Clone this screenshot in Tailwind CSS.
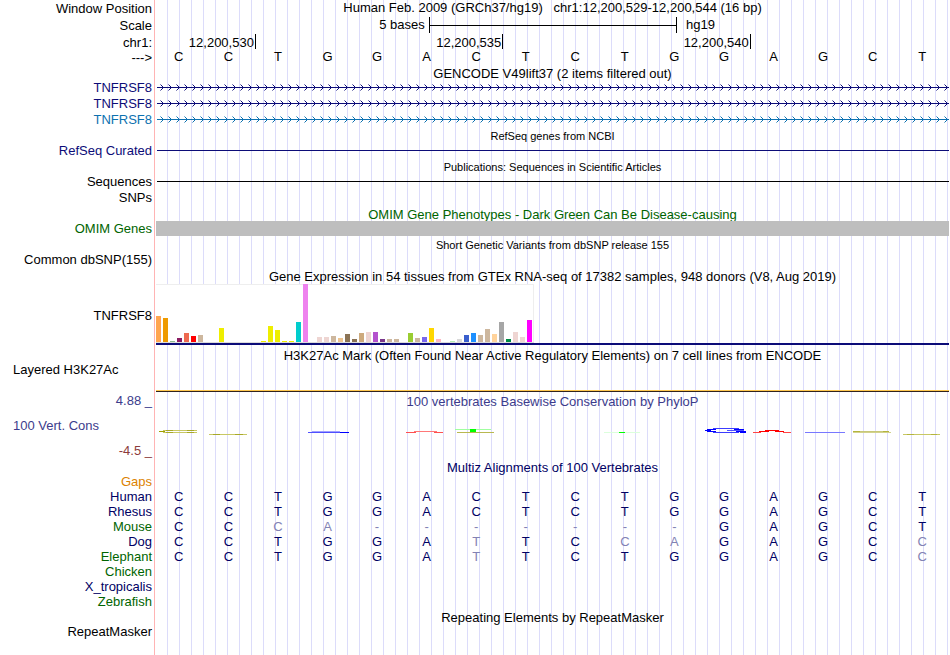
<!DOCTYPE html>
<html lang="en">
<head>
  <meta charset="utf-8">
  <meta name="viewport" content="width=device-width, initial-scale=1">
  <title>Genome Browser - hg19 chr1:12,200,529-12,200,544</title>
  <script src="https://cdn.jsdelivr.net/npm/@tailwindcss/browser@4"></script>
</head>
<body class="bg-white">
  <main class="relative min-h-screen pr-px font-['Liberation_Sans',Arial,sans-serif] text-[13px] leading-[15px] text-black">
    <!-- guide lines behind every track -->
    <div class="absolute inset-y-0 left-[154px] right-px border-l border-[#ffb4b4] pl-px">
      <div class="h-full bg-[repeating-linear-gradient(to_right,transparent_0px,transparent_11px,#dcdcfa_11px,#dcdcfa_12px)]"></div>
    </div>

    <div class="relative">
      <!-- position, scale and ruler -->
      <div class="flex h-[17px]">
        <div class="w-[156px] shrink-0 pr-1 text-right leading-[17px]">Window Position</div>
        <h1 class="flex-1 whitespace-pre text-center">Human Feb. 2009 (GRCh37/hg19)   chr1:12,200,529-12,200,544 (16 bp)</h1>
      </div>
      <div class="flex h-[17px]">
        <div class="w-[156px] shrink-0 pr-1 text-right leading-[17px]">Scale</div>
        <div class="flex flex-1">
          <div class="w-[34.4%] pr-1 text-right">5 bases</div>
          <div class="flex h-4 w-[31.3%] items-center border-x border-black">
            <div class="h-px w-full bg-black"></div>
          </div>
          <div class="pl-[9px]">hg19</div>
        </div>
      </div>
      <div class="flex h-[15px]">
        <div class="w-[156px] shrink-0 pr-1 text-right leading-[17px]">chr1:</div>
        <div class="flex flex-1">
          <div class="w-[12.6%] border-r border-black pr-px text-right leading-[17px]">12,200,530</div>
          <div class="w-[31.2%] border-r border-black pr-px text-right leading-[17px]">12,200,535</div>
          <div class="w-[31.2%] border-r border-black pr-px text-right leading-[17px]">12,200,540</div>
        </div>
      </div>
      <div class="flex h-[17px]">
        <div class="w-[156px] shrink-0 pr-1 text-right leading-[17px]">---&gt;</div>
        <div id="bases" class="grid flex-1 grid-cols-16 text-center"></div>
      </div>

      <!-- genes -->
      <h2 class="ml-[156px] h-[14px] text-center">GENCODE V49lift37 (2 items filtered out)</h2>
      <div class="flex h-4 text-[#0c0c78]">
        <div class="w-[156px] shrink-0 pr-1 text-right leading-4">TNFRSF8</div>
        <svg class="h-4 flex-1" shape-rendering="crispEdges">
          <defs>
            <pattern id="arrows" width="8" height="16" patternUnits="userSpaceOnUse">
              <path d="M5 5h1v1h-1zM6 6h1v3h-1zM5 9h1v1h-1z" fill="#0c0c78"/>
              <path d="M4 4h1v1h-1zM4 10h1v1h-1z" fill="#0c0c78" fill-opacity="0.5"/>
            </pattern>
            <pattern id="arrows-blue" width="8" height="16" patternUnits="userSpaceOnUse">
              <path d="M5 5h1v1h-1zM6 6h1v3h-1zM5 9h1v1h-1z" fill="#0c71b0"/>
              <path d="M4 4h1v1h-1zM4 10h1v1h-1z" fill="#0c71b0" fill-opacity="0.5"/>
            </pattern>
          </defs>
          <rect width="100%" height="16" fill="url(#arrows)"/>
          <rect x="1" y="7" width="100%" height="1" fill="#0c0c78"/>
        </svg>
      </div>
      <div class="flex h-4 text-[#0c0c78]">
        <div class="w-[156px] shrink-0 pr-1 text-right leading-4">TNFRSF8</div>
        <svg class="h-4 flex-1" shape-rendering="crispEdges">
          <rect width="100%" height="16" fill="url(#arrows)"/>
          <rect x="1" y="7" width="100%" height="1" fill="#0c0c78"/>
        </svg>
      </div>
      <div class="flex h-4 text-[#0c71b0]">
        <div class="w-[156px] shrink-0 pr-1 text-right leading-4">TNFRSF8</div>
        <svg class="h-4 flex-1" shape-rendering="crispEdges">
          <rect width="100%" height="16" fill="url(#arrows-blue)"/>
          <rect x="1" y="7" width="100%" height="1" fill="#0c71b0"/>
        </svg>
      </div>
      <h2 class="ml-[156px] h-[15px] pt-px text-center text-[11px]">RefSeq genes from NCBI</h2>
      <div class="flex h-4 text-[#0c0c78]">
        <div class="w-[156px] shrink-0 pr-1 text-right leading-4">RefSeq Curated</div>
        <div class="ml-px flex-1 pt-[7px]"><div class="h-px bg-[#0c0c78]"></div></div>
      </div>

      <!-- publications and variants -->
      <h2 class="ml-[156px] h-[15px] pt-px text-center text-[11px]">Publications: Sequences in Scientific Articles</h2>
      <div class="flex h-4">
        <div class="w-[156px] shrink-0 pr-1 text-right leading-4">Sequences</div>
        <div class="ml-px flex-1 pt-[7px]"><div class="h-px bg-black"></div></div>
      </div>
      <div class="h-4 w-[156px] pr-1 text-right leading-4">SNPs</div>
      <h2 class="ml-[156px] h-[15px] pt-px text-center text-[#006400]">OMIM Gene Phenotypes - Dark Green Can Be Disease-causing</h2>
      <div class="relative flex h-[15px] text-[#006400]">
        <div class="w-[156px] shrink-0 pr-1 text-right">OMIM Genes</div>
        <div class="flex-1 bg-[#bebebe]"></div>
      </div>
      <h2 class="ml-[156px] h-4 pt-0.5 text-center text-[11px]">Short Genetic Variants from dbSNP release 155</h2>
      <div class="h-4 w-[156px] pr-1 text-right leading-4">Common dbSNP(155)</div>

      <!-- GTEx expression -->
      <h2 class="ml-[156px] h-4 pt-px text-center">Gene Expression in 54 tissues from GTEx RNA-seq of 17382 samples, 948 donors (V8, Aug 2019)</h2>
      <div class="flex h-[61px] items-center">
        <div class="w-[156px] shrink-0 pr-1 pt-0.5 text-right">TNFRSF8</div>
        <div class="h-full flex-1 border-b-2 border-[#0c0c78]">
          <div id="tissues" class="flex h-[59px] w-[378px] items-end gap-0.5 border-b border-[#dcdcdc] bg-white shadow-[inset_-1px_1px_0_0_#eeeeee]"></div>
        </div>
      </div>

      <!-- regulation -->
      <h2 class="ml-[156px] h-[17px] pt-[3px] text-center">H3K27Ac Mark (Often Found Near Active Regulatory Elements) on 7 cell lines from ENCODE</h2>
      <div class="flex h-[30px]">
        <div class="w-[156px] shrink-0 pl-[13px]">Layered H3K27Ac</div>
        <div class="flex flex-1 flex-col justify-end">
          <div class="h-px bg-[#ffc850]"></div>
          <div class="h-px bg-[#32231e]"></div>
        </div>
      </div>

      <!-- conservation -->
      <div class="flex h-[17px] text-[#3c3c8c]">
        <div class="w-[156px] shrink-0 pr-1 text-right leading-[17px]">4.88 _</div>
        <h2 class="flex-1 pt-0.5 text-center">100 vertebrates Basewise Conservation by PhyloP</h2>
      </div>
      <div class="flex h-[51px]">
        <div class="flex w-[156px] shrink-0 flex-col justify-between pb-0.5 pl-[13px] pr-1 pt-[9px]">
          <div class="text-[#3c3c8c]">100 Vert. Cons</div>
          <div class="text-right text-[#8c3c3c]">-4.5 _</div>
        </div>
        <svg class="h-[51px] min-w-0 flex-1" viewBox="0 0 793 51" preserveAspectRatio="none" fill="none">
          <path d="M7 21.5H41M7 23.5H41" stroke="#c8c864"/>
          <path d="M10 21.5H17M31 21.5H38M10 23.5H17M31 23.5H38" stroke="#a8a828"/>
          <path d="M3 22.5H9" stroke="#a0a000"/>
          <path d="M53 25.5H91" stroke="#c8c864"/>
          <path d="M57 25.5H64M79 25.5H87" stroke="#a8a828"/>
          <path d="M152 23.5H193" stroke="#5050ff"/>
          <path d="M156 22.5H184" stroke="#a0a0ff"/>
          <path d="M184 23.5H193" stroke="#0000ff"/>
          <path d="M250 23.5H260M278 23.5H287" stroke="#ff5050"/>
          <path d="M258 22.5H281" stroke="#ff7878"/>
          <path d="M299 20.5H335" stroke="#a0ffa0"/>
          <path d="M301 23.5H338" stroke="#b8b850"/>
          <rect x="314" y="20" width="6" height="3" fill="#00ff00"/>
          <path d="M448 23.5H484" stroke="#dcffdc"/>
          <path d="M463 23.5H469" stroke="#00ff00"/>
          <path d="M557 19.5H583M557 23.5H583" stroke="#3c3cff"/>
          <path d="M549 21.5H555M551 20.5H560M551 22.5H560M578 20.5H588M580 22.5H590M584 23.5H590" stroke="#0000ff"/>
          <path d="M571 21.5H588" stroke="#5050ff"/>
          <path d="M597 23.5H605M627 23.5H635" stroke="#ff4646"/>
          <path d="M603 22.5H613M619 22.5H628M609 21.5H623" stroke="#ff0000"/>
          <path d="M649 23.5H689" stroke="#7878ff"/>
          <path d="M697 22.5H733" stroke="#c8c878"/>
          <path d="M697 23.5H735" stroke="#d2d28c"/>
          <path d="M697 22.5H704M727 22.5H733" stroke="#b4b43c"/>
          <path d="M747 25.5H784" stroke="#c8c864"/>
          <path d="M751 25.5H758M775 25.5H781" stroke="#b4b43c"/>
        </svg>
      </div>

      <!-- alignments -->
      <h2 class="ml-[156px] h-[14px] text-center text-[#000064]">Multiz Alignments of 100 Vertebrates</h2>
      <div class="h-[15px] w-[156px] pr-1 text-right text-[#dc8200]">Gaps</div>
      <table class="w-full table-fixed border-collapse">
        <tbody id="species"></tbody>
      </table>

      <h2 class="ml-[156px] h-[15px] pt-px text-center">Repeating Elements by RepeatMasker</h2>
      <div class="h-[15px] w-[156px] pr-1 text-right">RepeatMasker</div>
    </div>
  </main>

  <script>
    document.getElementById('bases').innerHTML = [...'CCTGGACTCTGGAGCT']
      .map(base => `<span class="pr-1">${base}</span>`).join('');

    // [color, height] per tissue
    const tissues = [
      ['#ffa54f', 26], ['#ee9a00', 24], ['#8fbc8f', 1], ['#8b1c62', 4], ['#ee6a50', 9], ['#ff0000', 6],
      ['#cdb79e', 7], ['#dddddd', 0], ['#dddddd', 0], ['#eeee00', 14], ['#eeee00', 0], ['#eeee00', 0],
      ['#eeee00', 0], ['#eeee00', 0], ['#eeee00', 0], ['#eeee00', 1], ['#eeee00', 16], ['#eeee00', 12],
      ['#eeee00', 1], ['#eeee00', 1], ['#00cdcd', 20], ['#ee82ee', 58], ['#9ac0cd', 0], ['#eed5d2', 5],
      ['#eed5d2', 5], ['#cdb79e', 6], ['#eec591', 4], ['#8b7355', 8], ['#8b7355', 3], ['#cdaa7d', 9],
      ['#eed5d2', 10], ['#b452cd', 10], ['#7a378b', 3], ['#cdb79e', 3], ['#cdb79e', 3], ['#cdb79e', 0],
      ['#9acd32', 9], ['#cdb79e', 4], ['#7a67ee', 5], ['#ffd700', 14], ['#ffb6c1', 3], ['#cd9b1d', 0],
      ['#b4eeb4', 1], ['#d9d9d9', 3], ['#3a5fcd', 7], ['#1e90ff', 9], ['#cdb79e', 7], ['#cdb79e', 13],
      ['#ffd39b', 8], ['#a6a6a6', 20], ['#008b45', 3], ['#eed5d2', 10], ['#eed5d2', 5], ['#ff00ff', 22]
    ];
    document.getElementById('tissues').innerHTML = tissues
      .map(([color, height]) => `<div class="w-[5px]" style="height:${height}px;background:${color}"></div>`).join('');

    // lower case marks a base that differs from human
    const species = [
      ['Human', 'CCTGGACTCTGGAGCT'],
      ['Rhesus', 'CCTGGACTCTGGAGCT'],
      ['Mouse', 'CCca-------GAGCT'],
      ['Dog', 'CCTGGAtTCcaGAGCc'],
      ['Elephant', 'CCTGGAtTCTGGAGCc'],
      ['Chicken', ''],
      ['X_tropicalis', ''],
      ['Zebrafish', '']
    ];
    const green = ['Mouse', 'Elephant', 'Chicken', 'Zebrafish'];
    document.getElementById('species').innerHTML = species.map(([name, seq]) => {
      const cells = [...seq.padEnd(16)].map(base => {
        const color = base === base.toUpperCase() && base !== '-' ? 'text-[#000064]' : 'text-[#8282b4]';
        return `<td class="p-0 pr-1 text-center ${color}">${base.toUpperCase()}</td>`;
      }).join('');
      const label = green.includes(name) ? 'text-[#006400]' : 'text-[#000064]';
      return `<tr class="h-[15px]"><th scope="row" class="w-[156px] p-0 pr-1 text-right font-normal ${label}">${name}</th>${cells}</tr>`;
    }).join('');
  </script>
</body>
</html>
